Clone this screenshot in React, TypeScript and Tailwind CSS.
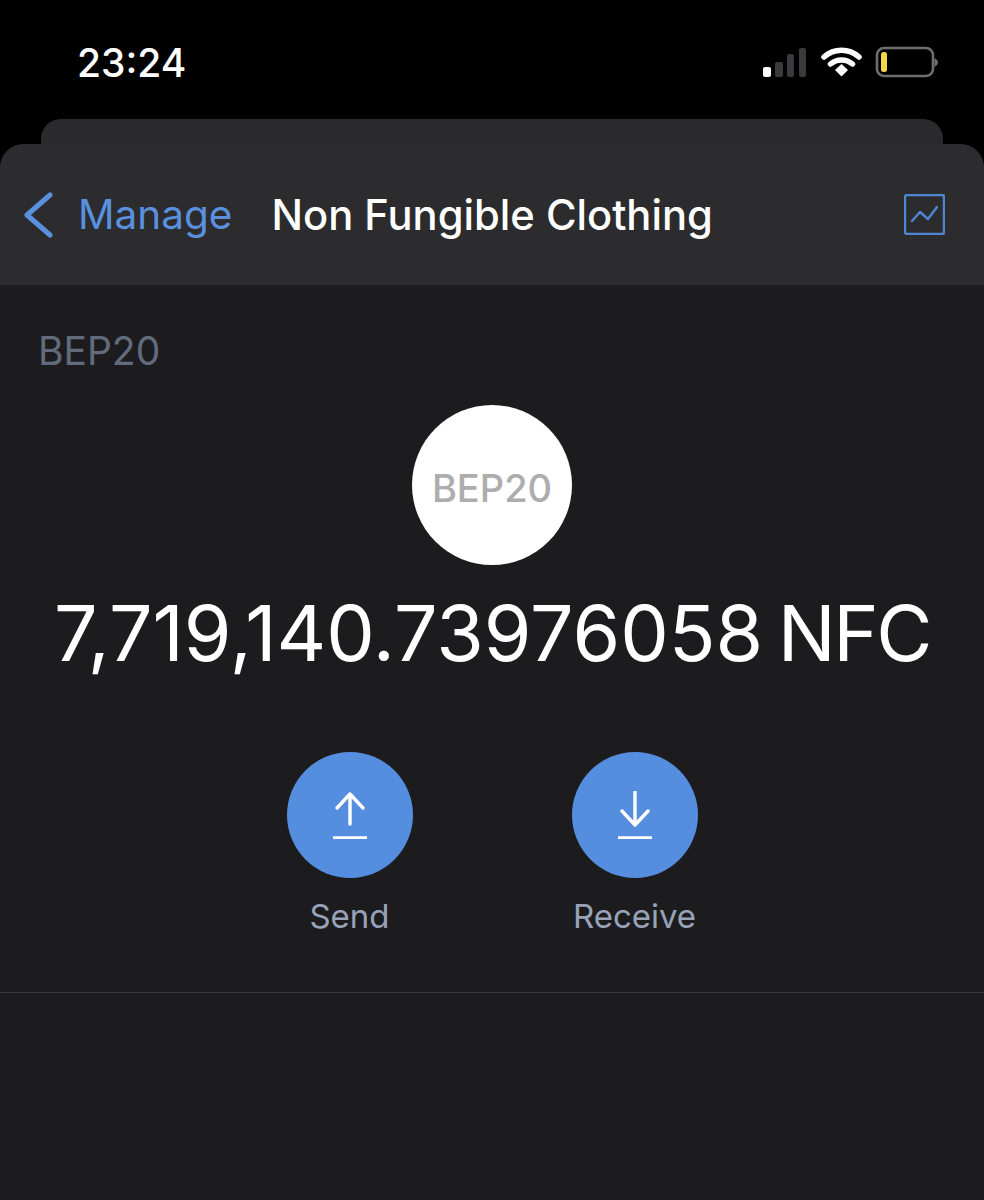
export default function App() {
  return (
    <div className="h-[1200px] w-[984px] overflow-hidden bg-black font-['Inter',sans-serif]">
      <div className="flex h-[119px] items-start justify-between pl-[77px] pr-[46px] pt-[40px]">
        <span className="text-[39px] font-medium leading-[46px] text-white">23:24</span>
        <svg width="176" height="32" viewBox="0 0 176 32" className="mt-[6px]">
          <rect x="1" y="21" width="8" height="10" rx="2" fill="#fff" />
          <rect x="13" y="16" width="8" height="15" rx="2" fill="#3a3a3c" />
          <rect x="25" y="8" width="7" height="23" rx="2" fill="#3a3a3c" />
          <rect x="37" y="2" width="7" height="29" rx="2" fill="#3a3a3c" />
          <path d="M62 11 A 26 26 0 0 1 97 11" fill="none" stroke="#fff" strokeWidth="5.5" strokeLinecap="round" />
          <path d="M68.5 18 A 17 17 0 0 1 90.5 18" fill="none" stroke="#fff" strokeWidth="5.5" strokeLinecap="round" />
          <path d="M73 24 L79.5 18 L86 24 L79.5 30.5 Z" fill="#fff" />
          <rect x="115" y="2" width="56" height="28" rx="7" fill="none" stroke="#6e6e6e" strokeWidth="2.6" />
          <rect x="119" y="6" width="6" height="20" rx="2.5" fill="#f4d649" />
          <path d="M172.5 12 C177 14 177 19 172.5 21 Z" fill="#6e6e6e" />
        </svg>
      </div>
      <div className="mx-[41px] h-[25px] rounded-t-[20px] bg-[#2a2a2c]" />
      <div className="h-[1056px] overflow-hidden rounded-t-[24px] bg-[#1c1c1e]">
        <header className="flex h-[141px] items-center bg-[#2c2c2e] pl-[23px] pr-[39px]">
          <svg width="30" height="48" viewBox="0 0 30 48" className="mt-[1px]">
            <path d="M27 4 L4 24 L27 44" fill="none" stroke="#5a90de" strokeWidth="5" strokeLinecap="round" strokeLinejoin="round" />
          </svg>
          <span className="ml-[25px] text-[40.5px] leading-[46px] text-[#5a90de]">Manage</span>
          <span className="ml-[39px] text-[41.7px] font-medium leading-[46px] text-white">Non Fungible Clothing</span>
          <svg width="41" height="41" viewBox="0 0 41 41" className="ml-auto">
            <rect x="1" y="1" width="39" height="39" rx="2" fill="none" stroke="#4f86d4" strokeWidth="2.4" />
            <path d="M8 27 L16 18 L24 25 L33 13" fill="none" stroke="#4f86d4" strokeWidth="2.4" strokeLinecap="round" strokeLinejoin="round" />
          </svg>
        </header>
        <div className="flex h-[708px] flex-col items-center border-b border-[#3a3a3c]">
          <div className="mt-[44px] w-full pl-[38px] text-[39px] leading-[44px] text-[#626b7c]">BEP20</div>
          <div className="mt-[32px] flex h-[160px] w-[160px] items-center justify-center rounded-full bg-white pt-[6px] text-[38px] font-medium text-[#adadad]">BEP20</div>
          <div className="mt-[26px] whitespace-nowrap text-[77px] leading-[84px] [word-spacing:-7px] text-white">
            7,719,140.73976058 <span className="tracking-[-2.5px]">NFC</span>
          </div>
          <div className="mt-[77px] flex gap-[159px]">
            <div className="flex w-[126px] flex-col items-center">
              <div className="flex h-[126px] w-[126px] items-center justify-center rounded-full bg-[#568edf]">
                <svg width="36" height="48" viewBox="0 0 36 48">
                  <path d="M18 33 V3 M5 17 L18 3 L31 17" fill="none" stroke="#fff" strokeWidth="3.4" strokeLinecap="round" strokeLinejoin="round" />
                  <path d="M1 47 H35" stroke="#fff" strokeWidth="3.6" />
                </svg>
              </div>
              <span className="mt-[18px] text-[33px] leading-[40px] text-[#98a2b8]">Send</span>
            </div>
            <div className="flex w-[126px] flex-col items-center">
              <div className="flex h-[126px] w-[126px] items-center justify-center rounded-full bg-[#568edf]">
                <svg width="36" height="48" viewBox="0 0 36 48">
                  <path d="M18 1 V34 M5 20 L18 34 L31 20" fill="none" stroke="#fff" strokeWidth="3.4" strokeLinecap="round" strokeLinejoin="round" />
                  <path d="M1 47 H35" stroke="#fff" strokeWidth="3.6" />
                </svg>
              </div>
              <span className="mt-[18px] whitespace-nowrap text-[33px] leading-[40px] text-[#98a2b8]">Receive</span>
            </div>
          </div>
        </div>
      </div>
    </div>
  );
}
